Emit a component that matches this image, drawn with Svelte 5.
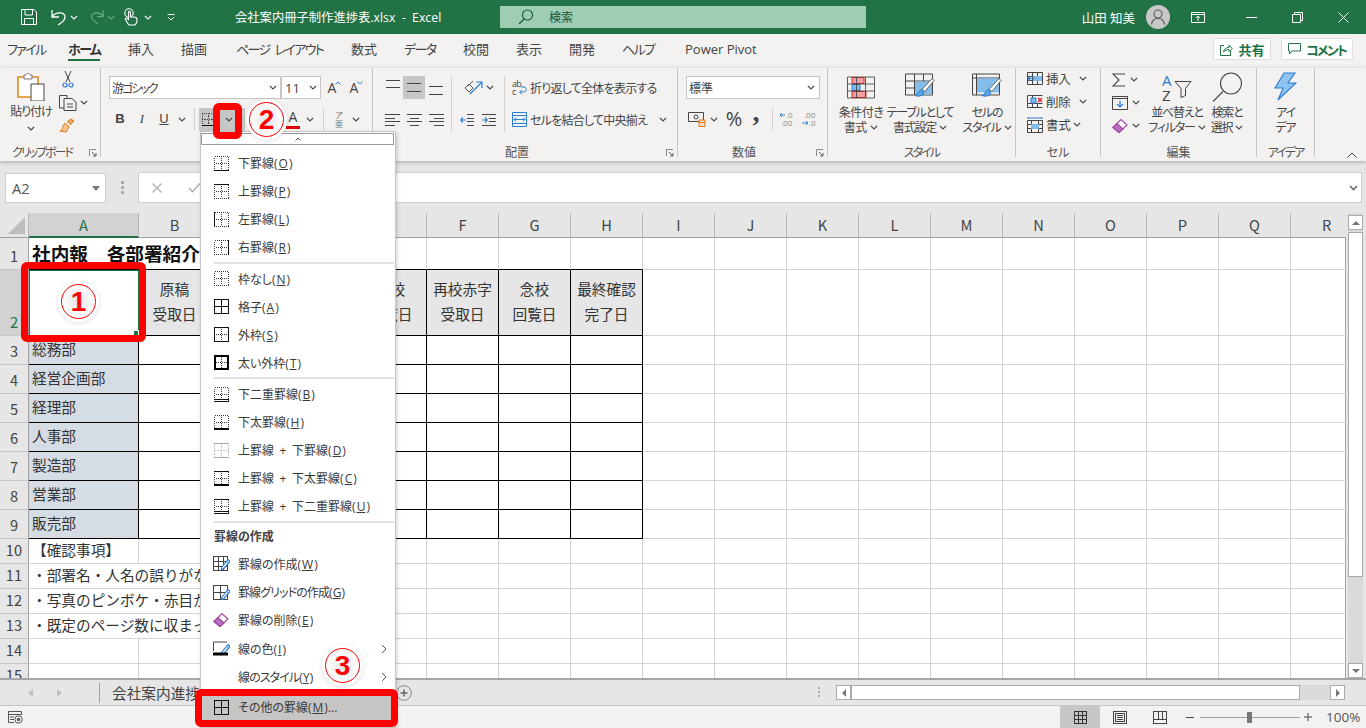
<script>
  const tabs = [
    { t: 'ファイル', w: 61, k: true }, { t: 'ホーム', w: 60, on: true, k: true }, { t: '挿入', w: 53 }, { t: '描画', w: 55 },
    { t: 'ページ レイアウト', w: 115, k: true }, { t: '数式', w: 53 }, { t: 'データ', w: 59, k: true }, { t: '校閲', w: 53 },
    { t: '表示', w: 53 }, { t: '開発', w: 53 }, { t: 'ヘルプ', w: 63, k: true }, { t: 'Power Pivot', w: 90 }
  ];
  const cols = ['A','B','C','D','E','F','G','H','I','J','K','L','M','N','O','P','Q','R'];
  const rows = [1,2,3,4,5,6,7,8,9,10,11,12,13,14,15];
  const text = {
    1: ['社内報　各部署紹介ページ制作進捗表'],
    2: ['', '原稿|受取日', '初校|回覧日', '初校|赤字', '再校|回覧日', '再校赤字|受取日', '念校|回覧日', '最終確認|完了日'],
    3: ['総務部'], 4: ['経営企画部'], 5: ['経理部'], 6: ['人事部'], 7: ['製造部'], 8: ['営業部'], 9: ['販売部'],
    10: ['【確認事項】'], 11: ['・部署名・人名の誤りがないか'], 12: ['・写真のピンボケ・赤目がないか'], 13: ['・既定のページ数に収まっているか']
  };
  function cellClass(r, c) {
    const k = ['cell'];
    if (r === 1) { k.push('big'); if (c < 3) k.push('nr'); if (c <= 7) k.push('bb'); }
    if (r === 2) { if (c === 0) k.push('sel'); else if (c <= 7) k.push('hd', 'br', 'bb'); }
    if (r >= 3 && r <= 9 && c <= 7) { k.push('br', 'bb'); if (c === 0) k.push('dept'); }
    if (r >= 11 && r <= 13 && c < 3) k.push('nr');
    if (c === 17) k.push('last');
    return k.join(' ');
  }
  const thinB = {
    bottom: 'M0 14.5H15', top: 'M0 .5H15', left: 'M.5 0V15', right: 'M14.5 0V15', none: '',
    all: 'M.5 .5H14.5V14.5H.5Z M7.5 0V15 M0 7.5H15', outer: 'M.5 .5H14.5V14.5H.5Z',
    dbl: 'M0 12.5H15 M0 14.5H15', tdbl: 'M0 .5H15 M0 12.5H15 M0 14.5H15', tthick: 'M0 .5H15'
  };
  const menu1 = [
    [['下罫線(','O',')','bottom'],['上罫線(','P',')','top'],['左罫線(','L',')','left'],['右罫線(','R',')','right']],
    [['枠なし(','N',')','none'],['格子(','A',')','all'],['外枠(','S',')','outer'],['太い外枠(','T',')','thick']],
    [['下二重罫線(','B',')','dbl'],['下太罫線(','H',')','thickb'],['上罫線 + 下罫線(','D',')','grey'],['上罫線 + 下太罫線(','C',')','tthick'],['上罫線 + 下二重罫線(','U',')','tdbl']]
  ];
</script>

{#snippet chev(cls = '')}
  <svg class="chev {cls}" width="8" height="5" viewBox="0 0 8 5"><path d="M.8 .8 4 4 7.2 .8" fill="none" stroke-width="1.2"/></svg>
{/snippet}

{#snippet launcher()}
  <svg class="launch" width="8" height="8" viewBox="0 0 8 8"><path d="M.5 7V.5H7" fill="none" stroke="#8a8886"/><path d="M3 3 7 7M7 4V7H4" fill="none" stroke="#605e5c"/></svg>
{/snippet}

{#snippet bi(k)}
  <svg class="mi" width="15" height="15" viewBox="0 0 15 15" shape-rendering="crispEdges">
    {#if k === 'grey'}
      <path d="M.5 .5H14.5V14.5H.5Z M7.5 0V15 M0 7.5H15" fill="none" stroke="#c8c8c8" stroke-dasharray="2 1"/>
      <path d="M0 .5H15 M0 14.5H15" fill="none" stroke="#a8a8a8"/>
    {:else}
      {#if k !== 'all' && k !== 'outer' && k !== 'thick'}
        <path d="M.5 .5H14.5V14.5H.5Z" fill="none" stroke="#3b3a39" stroke-dasharray="1 1"/>
      {/if}
      {#if k !== 'all'}
        <path d="M7.5 2V13 M2 7.5H13" fill="none" stroke="#3b3a39" stroke-dasharray="1 1"/>
      {/if}
      {#if thinB[k]}<path d={thinB[k]} fill="none" stroke="#111"/>{/if}
      {#if k === 'thick'}<path d="M1 1H14V14H1Z" fill="none" stroke="#000" stroke-width="2"/>{/if}
      {#if k === 'thickb' || k === 'tthick'}<path d="M0 14H15" fill="none" stroke="#000" stroke-width="2"/>{/if}
    {/if}
  </svg>
{/snippet}

{#snippet pen()}
  <path d="M9 11 15 3.5 17 5.2 11 12.5 8.5 13.5Z" fill="#fff" stroke="#2b7cd3" stroke-width="1.2"/>
  <path d="M13.5 5 15.5 7" stroke="#2b7cd3"/>
{/snippet}

{#snippet eraser()}
  <svg width="16" height="16" viewBox="0 0 16 16"><path d="M1 9.5 9 1.5 15 7 7 14.5Z" fill="#fff" stroke="#a349a4" stroke-width="1.2"/><path d="M1 9.5 5 5.5 11 11 7 14.5Z" fill="#b86fc0" stroke="#a349a4" stroke-width="1.2"/></svg>
{/snippet}

{#snippet largeText(a, b)}
  <span class="ll">{a}</span><span class="ll">{b} {@render chev()}</span>
{/snippet}

<div class="app">
  <header class="titlebar">
    <div class="qat">
      <svg width="16" height="16" viewBox="0 0 16 16" fill="none" stroke="#fff"><path d="M.5 .5H13L15.5 3V15.5H.5Z M4 .5V6H11.5V.5 M3.5 15.5V9.5H12.5V15.5"/></svg>
      <i></i>
      <svg width="18" height="17" viewBox="0 0 18 17" fill="none" stroke="#fff" stroke-width="1.3"><path d="M2 1V8H9 M2 8C5 3 15 2 15 8 15 12 11 14 8 16"/></svg>
      {@render chev('w')}
      <i></i>
      <svg width="16" height="16" viewBox="0 0 18 17" fill="none" stroke="#6aa587" stroke-width="1.3"><path d="M16 1V8H9 M16 8C13 3 3 2 3 8 3 12 7 14 10 16"/></svg>
      {@render chev('dim')}
      <i></i>
      <svg width="14" height="18" viewBox="0 0 14 18" fill="none" stroke="#fff" stroke-width="1.1"><circle cx="5" cy="5" r="4.2"/><path d="M4 16 1.5 11.5C1 10 2.5 9.5 3.5 10.5L4.5 11.5V4.5C4.5 3 6.5 3 6.5 4.5V9H10C12 9 13 10 13 11.5V13C13 15 12 16 11 17H5Z" fill="#217346"/></svg>
      {@render chev('w')}
      <svg width="8" height="7" viewBox="0 0 8 7" fill="none" stroke="#fff"><path d="M.5 .5H7.5M.8 3 4 6 7.2 3"/></svg>
    </div>
    <div class="doc">会社案内冊子制作進捗表.xlsx  -  Excel</div>
    <div class="search">
      <svg width="16" height="16" viewBox="0 0 16 16" fill="none" stroke="#17553a" stroke-width="1.1"><circle cx="9.5" cy="6" r="5"/><path d="M6 10 1 15"/></svg>
      <span>検索</span>
    </div>
    <div class="user">
      <span class="uname">山田 知美</span>
      <span class="avatar">
        <svg width="16" height="16" viewBox="0 0 16 16" fill="none" stroke="#555" stroke-width="1.1"><circle cx="8" cy="5" r="4"/><path d="M1.5 15.5C2 11.5 4.5 9.5 8 9.5S14 11.5 14.5 15.5"/></svg>
      </span>
      <span class="ctl disp"><svg width="14" height="11" viewBox="0 0 14 11" fill="none" stroke="#fff"><path d="M.5 .5H13.5V10.5H.5Z M.5 2.5H13.5 M7 9V4.5 M5 6 7 4 9 6"/></svg></span>
      <span class="ctl"><svg width="11" height="1" viewBox="0 0 11 1"><path d="M0 .5H11" stroke="#fff"/></svg></span>
      <span class="ctl"><svg width="11" height="11" viewBox="0 0 11 11" fill="none" stroke="#fff"><path d="M.5 2.5H8.5V10.5H.5Z M2.5 2.5V.5H10.5V8.5H8.5"/></svg></span>
      <span class="ctl"><svg width="11" height="11" viewBox="0 0 11 11" fill="none" stroke="#fff"><path d="M.5 .5 10.5 10.5M10.5 .5 .5 10.5"/></svg></span>
    </div>
  </header>

  <nav class="tabrow">
    {#each tabs as t}
      <div class="tab" class:on={t.on} class:k={t.k} style="width:{t.w}px"><span>{t.t}</span></div>
    {/each}
    <div class="shr">
      <svg width="14" height="13" viewBox="0 0 14 13" fill="none" stroke="#217346"><path d="M5 2.5H1.5V12.5H11.5V8 M4.5 9C5 6 7 4.5 10 4.5V2L13 5.5 10 8.5V6.5C8 6.5 6 7.5 4.5 9Z"/></svg>
      <b>共有</b>
    </div>
    <div class="shr cm">
      <svg width="13" height="12" viewBox="0 0 13 12" fill="none" stroke="#217346"><path d="M.5 .5H12.5V8H4L1.5 11V8H.5Z"/></svg>
      <b>コメント</b>
    </div>
  </nav>

  <section class="ribbon">
    <div class="grp g-clip">
      <div class="body clipb">
        <div class="paste">
          <svg width="28" height="28" viewBox="0 0 28 28"><path d="M1 4H21V24H1Z" fill="#fff" stroke="#e08a1e" stroke-width="1.6"/><path d="M7 4V2H9C9 0 13 0 13 2H15V6H7Z" fill="#fff" stroke="#777"/><path d="M14 11H27V28H14Z" fill="#fff" stroke="#444"/></svg>
          <span class="ll pl">貼り付け</span>
          {@render chev()}
        </div>
        <div class="tools">
          <span><svg width="12" height="17" viewBox="0 0 12 17" fill="none"><path d="M3 0 8 11M9 0 4 11" stroke="#444"/><circle cx="3" cy="14" r="2" stroke="#2b7cd3" stroke-width="1.2"/><circle cx="9" cy="14" r="2" stroke="#2b7cd3" stroke-width="1.2"/></svg></span>
          <span class="t2"><svg width="18" height="16" viewBox="0 0 18 16" fill="none" stroke="#444"><path d="M.5 .5H8V13H.5Z"/><path d="M5 3.5H13L17 7V15.5H5Z" fill="#f3f2f1"/><path d="M8 9H14M8 12H14"/></svg>{@render chev()}</span>
          <span class="t2"><svg width="16" height="15" viewBox="0 0 16 15"><path d="M6 5 10 9 7 14 1 13C3 12 4 10 4 8Z" fill="#f7c58a" stroke="#d9791b"/><path d="M8 4 12 1 15 3 11 7" fill="#e8a35a" stroke="#d9791b"/></svg></span>
        </div>
      </div>
      <div class="lbl tight">クリップボード{@render launcher()}</div>
    </div>

    <div class="grp g-font">
      <div class="body fontb">
        <div class="r1">
          <div class="sel-box fname"><span>游ゴシック</span>{@render chev()}</div>
          <div class="sel-box fsize"><span>11</span>{@render chev()}</div>
          <span class="aa">A<svg class="sup" width="6" height="4" viewBox="0 0 6 4" fill="none" stroke="#2b7cd3"><path d="M.5 3.5 3 1 5.5 3.5"/></svg></span>
          <span class="aa">A<svg class="sup" width="6" height="4" viewBox="0 0 6 4" fill="none" stroke="#2b7cd3"><path d="M.5 .5 3 3 5.5 .5"/></svg></span>
        </div>
        <div class="r2">
          <b class="bt">B</b><em class="bt it">I</em><u class="bt">U</u>{@render chev()}
          <i></i><span class="vs1"></span><i></i>
          <span class="borderbtn">
            <svg width="13" height="13" viewBox="0 0 15 15" shape-rendering="crispEdges"><path d="M.5 .5H14.5V14.5H.5Z M7.5 0V15 M0 7.5H15" fill="none" stroke="#333" stroke-dasharray="1 1"/><path d="M0 14.5H15" stroke="#000"/></svg>
            {@render chev()}
          </span>
          <svg width="18" height="16" viewBox="0 0 18 16" fill="none" stroke="#444"><path d="M8 1 14 7 8 13 2 7Z"/><path d="M0 14H14" stroke="#ffd400" stroke-width="2"/></svg>
          {@render chev()}
          <span class="fc">A</span>
          {@render chev()}
          <i></i><span class="vs1"></span><i></i>
          <span class="phon">ア<br/>亜</span>
          {@render chev()}
        </div>
      </div>
      <div class="lbl"></div>
    </div>

    <div class="grp g-align">
      <div class="body alignb">
        <span class="ai"><svg width="14" height="23" viewBox="0 0 14 23"><path d="M0 4.5H14M0 11.5H14" stroke="#444"/></svg></span>
        <span class="ai on"><svg width="14" height="23" viewBox="0 0 14 23"><path d="M0 7.5H14M0 15.5H14" stroke="#444"/></svg></span>
        <span class="ai"><svg width="14" height="23" viewBox="0 0 14 23"><path d="M0 10.5H14M0 18.5H14" stroke="#444"/></svg></span>
        <i></i>
        <span class="vs2 a"></span>
        <span class="angle"><svg width="20" height="16" viewBox="0 0 20 16" fill="none"><path d="M1 8 5 4 9 8 5 12Z M4 6 9 1" stroke="#555"/><path d="M6 14 17 3M12 2H18V8" stroke="#2b7cd3" stroke-width="1.2"/></svg>{@render chev()}</span>
        <i></i>
        <span class="vs2 b"></span>
        <i></i>
        <span class="wide">
          <svg width="15" height="17" viewBox="0 0 15 17"><text x="0" y="8" class="svt" fill="#444">ab</text><text x="0" y="16" class="svt" fill="#444">c</text><path d="M8 13H12C15 13 15 8 12 8H9M10 11 7.5 13 10 15.5" fill="none" stroke="#2b7cd3"/></svg>
          <span>折り返して全体を表示する</span>
        </span>

        <span class="ai"><svg width="15" height="12" viewBox="0 0 15 12"><path d="M0 .5H15M0 4.5H10M0 7.5H15M0 11.5H10" stroke="#444"/></svg></span>
        <span class="ai"><svg width="15" height="12" viewBox="0 0 15 12"><path d="M0 .5H15M3 4.5H12M0 7.5H15M3 11.5H12" stroke="#444"/></svg></span>
        <span class="ai"><svg width="15" height="12" viewBox="0 0 15 12"><path d="M0 .5H15M5 4.5H15M0 7.5H15M5 11.5H15" stroke="#444"/></svg></span>
        <i></i>
        <span class="indents">
          <svg width="14" height="12" viewBox="0 0 14 12" fill="none"><path d="M7 .5H14M7 4.5H14M7 7.5H14M7 11.5H14" stroke="#444"/><path d="M6 6H1M3 3.5 .8 6 3 8.5" stroke="#2b7cd3" stroke-width="1.2"/></svg>
          <svg width="14" height="12" viewBox="0 0 14 12" fill="none"><path d="M0 .5H14M7 4.5H14M7 7.5H14M0 11.5H14" stroke="#444"/><path d="M0 6H5M3 3.5 5.2 6 3 8.5" stroke="#2b7cd3" stroke-width="1.2"/></svg>
        </span>
        <span class="wide merge">
          <svg width="15" height="15" viewBox="0 0 15 15" fill="none"><path d="M.5 .5H14.5V14.5H.5Z M.5 3.5H14.5 M.5 11.5H14.5" stroke="#2b7cd3"/><path d="M2 7.5H13M4 5.5 2 7.5 4 9.5M11 5.5 13 7.5 11 9.5" stroke="#2b7cd3"/></svg>
          <span>セルを結合して中央揃え</span>
          {@render chev()}
        </span>
      </div>
      <div class="lbl">配置{@render launcher()}</div>
    </div>

    <div class="grp g-num">
      <div class="body numb">
        <div class="sel-box nf"><span>標準</span>{@render chev()}</div>
        <div class="nr2">
          <svg width="18" height="16" viewBox="0 0 18 16" fill="none"><path d="M.5 1.5H15.5V10.5H.5Z" stroke="#444"/><circle cx="8" cy="6" r="2" stroke="#444"/><path d="M11 9H17V15.5H11Z M11 11.5H17" stroke="#e3730f" fill="#fbe3c8"/></svg>
          {@render chev()}
          <span class="pct">%</span>
          <span class="com">,</span>
          <i></i>
          <span class="vs1"></span>
          <svg width="15" height="15" viewBox="0 0 15 15"><path d="M6 3H1M3 1 1 3 3 5" fill="none" stroke="#2b7cd3"/><text x="7" y="6" class="svd">.0</text><text x="2" y="14" class="svd">.00</text></svg>
          <svg width="16" height="15" viewBox="0 0 16 15"><text x="3" y="6" class="svd">.00</text><path d="M1 11H7M5 9 7 11 5 13" fill="none" stroke="#2b7cd3"/><text x="8" y="14" class="svd">.0</text></svg>
        </div>
      </div>
      <div class="lbl">数値{@render launcher()}</div>
    </div>

    <div class="grp g-style">
      <div class="body styleb">
        <div class="large c1">
          <svg width="28" height="22" viewBox="0 0 28 22"><path d="M5 1H17V7H5Z M5 15H19V21H5Z" fill="#f4a0a6" stroke="#e02020"/><path d="M5 8H13V14H5Z" fill="#7fbaea" stroke="#2b7cd3"/><path d="M.5 .5H27.5V21.5H.5Z M.5 7.5H27.5 M.5 14.5H27.5 M9.5 .5V21.5 M18.5 .5V21.5" fill="none" stroke="#444" opacity=".85"/></svg>
          <div class="ltxt">{@render largeText('条件付き', '書式')}</div>
        </div>
        <div class="large c2">
          <svg width="30" height="28" viewBox="0 0 30 28"><path d="M.5 .5H27.5V21.5H.5Z M.5 7.5H27.5 M.5 14.5H27.5 M9.5 .5V21.5 M18.5 .5V21.5" fill="none" stroke="#444"/><path d="M10 8H27V21H10Z" fill="#83bdec"/><path d="M27 5 29 7 20 18 17 16Z" fill="#fff" stroke="#666"/><path d="M16 16C18 17 19 19 18 21 16 23 12 23 10 22 13 21 13 18 16 16Z" fill="#5ba7e6" stroke="#2b7cd3"/></svg>
          <div class="ltxt">{@render largeText('テーブルとして', '書式設定')}</div>
        </div>
        <div class="large c3">
          <svg width="30" height="28" viewBox="0 0 30 28"><path d="M.5 .5H27.5V21.5H.5Z M.5 4.5H27.5 M4.5 .5V21.5" fill="none" stroke="#444"/><path d="M5 5H27V19H5Z" fill="#83bdec"/><path d="M27 5 29 7 20 18 17 16Z" fill="#fff" stroke="#666"/><path d="M16 16C18 17 19 19 18 21 16 23 12 23 10 22 13 21 13 18 16 16Z" fill="#5ba7e6" stroke="#2b7cd3"/></svg>
          <div class="ltxt">{@render largeText('セルの', 'スタイル')}</div>
        </div>
      </div>
      <div class="lbl ctr tight">スタイル</div>
    </div>

    <div class="grp g-cell">
      <div class="body cellb">
        <div class="crow">
          <svg width="16" height="13" viewBox="0 0 16 13" fill="none"><path d="M.5 .5H15.5V12.5H.5Z M.5 4.5H15.5 M.5 8.5H15.5 M5.5 .5V12.5 M10.5 .5V12.5" stroke="#444"/><path d="M6 4H15V9H6Z" fill="#7fbaea"/><path d="M7 6.5H1M3.5 4 1 6.5 3.5 9" stroke="#2b7cd3" stroke-width="1.2"/></svg>
          <span>挿入</span>{@render chev()}
        </div>
        <div class="crow">
          <svg width="16" height="13" viewBox="0 0 16 13" fill="none"><path d="M.5 .5H15.5M.5 12.5H15.5M.5 .5V12.5M.5 8.5H15.5M5.5 8.5V12.5M10.5 8.5V12.5M5.5 .5V3" stroke="#444"/><path d="M4 3H9V8H4Z" fill="#7fbaea" stroke="#2b7cd3"/><path d="M11 3 15 7M15 3 11 7" stroke="#e02020" stroke-width="1.3"/></svg>
          <span>削除</span>{@render chev()}
        </div>
        <div class="crow fm">
          <svg width="16" height="16" viewBox="0 0 16 16" fill="none"><path d="M.5 3.5H15.5V15.5H.5Z M.5 7.5H15.5 M.5 11.5H15.5 M4.5 3.5V15.5 M11.5 3.5V15.5" stroke="#444"/><path d="M4 7H12V12H4Z" fill="#7fbaea"/><path d="M1 1H15M1 0V2M15 0V2" stroke="#2b7cd3"/></svg>
          <span>書式</span>{@render chev()}
        </div>
      </div>
      <div class="lbl ctr">セル</div>
    </div>

    <div class="grp g-edit">
      <div class="body editb">
        <div class="tools2">
          <span><svg width="14" height="14" viewBox="0 0 14 14" fill="none"><path d="M13 1H1L7 7 1 13H13" stroke="#444" stroke-width="1.1"/></svg>{@render chev()}</span>
          <span><svg width="16" height="14" viewBox="0 0 16 14" fill="none"><path d="M.5 .5H15.5V13.5H.5Z M.5 2.5H15.5" stroke="#444"/><path d="M8 4.5V11M5 8 8 11 11 8" stroke="#2b7cd3" stroke-width="1.2"/></svg>{@render chev()}</span>
          <span>{@render eraser()}{@render chev()}</span>
        </div>
        <div class="large c4">
          <svg width="30" height="28" viewBox="0 0 30 28"><text x="0" y="12" class="sva" fill="#2b7cd3">A</text><text x="0" y="27" class="sva" fill="#444">Z</text><path d="M13 8H29L23.5 15V22L19 24V15Z" fill="none" stroke="#444"/></svg>
          <div class="ltxt">{@render largeText('並べ替えと', 'フィルター')}</div>
        </div>
        <div class="large c5">
          <svg width="30" height="30" viewBox="0 0 30 30" fill="none" stroke="#444" stroke-width="1.1"><circle cx="19" cy="11" r="10.5"/><path d="M11 19 1 29"/></svg>
          <div class="ltxt">{@render largeText('検索と', '選択')}</div>
        </div>
      </div>
      <div class="lbl ctr">編集</div>
    </div>

    <div class="grp g-idea">
      <div class="body ideab">
        <svg width="23" height="29" viewBox="0 0 23 29"><path d="M10 1H21L14 11H22L4 28 9 16H1Z" fill="#8ec3ef" stroke="#2b7cd3" stroke-width="1.1"/></svg>
        <div class="ltxt"><span class="ll">アイ</span><span class="ll">デア</span></div>
      </div>
      <div class="lbl ctr tight">アイデア</div>
    </div>

    <div class="rb-end">
      <svg width="10" height="6" viewBox="0 0 10 6" fill="none" stroke="#444"><path d="M.5 5.5 5 1 9.5 5.5"/></svg>
    </div>
  </section>

  <section class="fbar">
    <div class="namebox"><span>A2</span><em class="caret"></em></div>
    <div class="dots"></div>
    <div class="fx">
      <svg width="12" height="12" viewBox="0 0 12 12" fill="none" stroke="#b5b5b5" stroke-width="1.4"><path d="M1.5 1.5 10.5 10.5M10.5 1.5 1.5 10.5"/></svg>
      <svg class="ck" width="13" height="11" viewBox="0 0 13 11" fill="none" stroke="#b5b5b5" stroke-width="1.6"><path d="M1 6 4.5 9.5 12 1.5"/></svg>
      <svg class="fxc" width="9" height="6" viewBox="0 0 9 6" fill="none" stroke="#6a6a6a" stroke-width="1.6"><path d="M1 1 4.5 4.5 8 1"/></svg>
    </div>
  </section>

  <section class="main">
    <div class="sheet">
      <div class="corner"><em></em></div>
      {#each cols as c, i}
        <div class="colh" class:csel={i === 0} class:lasth={i === 17}>{c}</div>
      {/each}
      {#each rows as r}
        <div class="rowh" class:rsel={r === 2}>{r}</div>
        {#each cols as c, i}
          {@const v = text[r]?.[i]}
          <div class={cellClass(r, i)}>
            {#if v && r === 2}
              <div class="two">{#each v.split('|') as l}<span>{l}</span>{/each}</div>
            {:else if v}
              <span class="tx">{v}</span>
            {/if}
            {#if r === 2 && i === 0}<em class="handle"></em>{/if}
          </div>
        {/each}
      {/each}
    </div>
    <aside class="vscroll">
      <div class="sbtn"><em class="tri up"></em></div>
      <div class="vthumb"></div>
      <div class="vrest"></div>
      <div class="sbtn"><em class="tri dn"></em></div>
    </aside>
  </section>

  <section class="sheetbar">
    <em class="nav lft"></em>
    <em class="nav rgt"></em>
    <span class="sbsep"></span>
    <span class="stab">会社案内進捗表</span>
    <span class="plus">
      <svg width="16" height="16" viewBox="0 0 16 16" fill="none"><circle cx="8" cy="8" r="7.3" stroke="#888"/><path d="M4.5 8H11.5M8 4.5V11.5" stroke="#666" stroke-width="1.5"/></svg>
    </span>
    <span class="sdots"></span>
    <div class="hs">
      <div class="sbtn h"><em class="tri lf"></em></div>
      <div class="hthumb"></div>
      <div class="hrest"></div>
      <div class="sbtn h"><em class="tri rt"></em></div>
    </div>
  </section>

  <footer class="status">
    <svg class="mac" width="15" height="13" viewBox="0 0 15 13" fill="none" stroke="#555"><path d="M.5 .5H13.5V4M.5 .5V11.5H6M.5 3.5H13.5M2 6H6M2 8.5H6"/><circle cx="10.5" cy="8.5" r="3.7"/><circle cx="10.5" cy="8.5" r="1.3" fill="#555"/></svg>
    <div class="views">
      <span class="vbtn on"><svg width="13" height="13" viewBox="0 0 13 13" fill="none" stroke="#333" shape-rendering="crispEdges"><path d="M.5 .5H12.5V12.5H.5Z M4.5 .5V12.5 M8.5 .5V12.5 M.5 4.5H12.5 M.5 8.5H12.5"/></svg></span>
      <span class="vbtn"><svg width="14" height="13" viewBox="0 0 14 13" fill="none" stroke="#444" shape-rendering="crispEdges"><path d="M.5 .5H13.5V12.5H.5Z M2.5 2.5H11.5V10.5H2.5Z M4 4.5H10 M4 6.5H10 M4 8.5H10"/></svg></span>
      <span class="vbtn"><svg width="14" height="13" viewBox="0 0 14 13" fill="none" stroke="#444" shape-rendering="crispEdges"><path d="M.5 .5H13.5V12.5H.5Z M.5 8.5H13.5 M5.5 .5V8.5 M9.5 .5V8.5" /></svg></span>
    </div>
    <svg class="zm" width="8" height="1" viewBox="0 0 8 1"><path d="M0 .5H8" stroke="#444"/></svg>
    <div class="slider"><em></em></div>
    <svg class="zp" width="8" height="8" viewBox="0 0 8 8"><path d="M0 4H8M4 0V8" stroke="#444"/></svg>
    <span class="zoom">100%</span>
  </footer>

  <div class="menu">
    <div class="mscroll">
      <svg width="6" height="4" viewBox="0 0 6 4" fill="none" stroke="#444"><path d="M.5 3.5 3 1 5.5 3.5"/></svg>
    </div>
    {#each menu1 as sec, si}
      {#if si > 0}<div class="msep"></div>{/if}
      {#each sec as m}
        <div class="mitem">{@render bi(m[3])}<span>{m[0]}<u>{m[1]}</u>{m[2]}</span></div>
      {/each}
    {/each}
    <div class="msep"></div>
    <div class="mhead">罫線の作成</div>
    <div class="mitem x">
      <svg class="mi" width="17" height="15" viewBox="0 0 17 15" fill="none"><path d="M.5 .5H14.5V14.5H.5Z M.5 5.5H14.5 M.5 10.5H14.5 M5.5 .5V14.5 M10.5 .5V14.5" stroke="#444" shape-rendering="crispEdges"/>{@render pen()}</svg>
      <span>罫線の作成(<u>W</u>)</span>
    </div>
    <div class="mitem x">
      <svg class="mi" width="17" height="15" viewBox="0 0 17 15" fill="none"><path d="M.5 .5H14.5V14.5H.5Z M.5 7.5H14.5 M7.5 .5V14.5" stroke="#444" shape-rendering="crispEdges"/><g transform="translate(0,1)">{@render pen()}</g></svg>
      <span class="k">罫線グリッドの作成(<u>G</u>)</span>
    </div>
    <div class="mitem x"><span class="mi">{@render eraser()}</span><span>罫線の削除(<u>E</u>)</span></div>
    <div class="mitem x">
      <svg class="mi" width="17" height="15" viewBox="0 0 17 15" fill="none"><path d="M.5 10V1H14" stroke="#444"/>{@render pen()}<path d="M0 13H15" stroke="#000" stroke-width="3"/></svg>
      <span>線の色(<u>I</u>)</span><svg class="arr" width="6" height="10" viewBox="0 0 6 10" fill="none" stroke="#555"><path d="M1 1 5 5 1 9"/></svg>
    </div>
    <div class="mitem x">
      <span class="mi"></span>
      <span class="k">線のスタイル(<u>Y</u>)</span><svg class="arr" width="6" height="10" viewBox="0 0 6 10" fill="none" stroke="#555"><path d="M1 1 5 5 1 9"/></svg>
    </div>
    <div class="mitem more">{@render bi('all')}<span>その他の罫線(<u>M</u>)...</span></div>
  </div>

  <div class="frame f1"></div>
  <div class="frame f2"></div>
  <div class="frame f3"></div>
  <div class="badge b1"><span>1</span></div>
  <div class="badge b2"><span>2</span></div>
  <div class="badge b3"><span>3</span></div>
</div>

<style>
  :global(body) { margin: 0; }
  .app {
    position: relative; width: 1366px; height: 728px; overflow: hidden; background: #e6e6e6;
    font-family: "Open Sans", "Noto Sans CJK JP", sans-serif; font-size: 12px; color: #444;
    font-feature-settings: "palt";
  }
  i { display: block; }
  em { font-style: normal; display: block; }
  svg { display: block; flex: none; }
  .chev { stroke: #444; }
  .chev.w { stroke: #fff; }
  .chev.dim { stroke: #6aa587; }
  .ll .chev { display: inline-block; vertical-align: 2px; margin-left: 1px; }

  /* title bar */
  .titlebar { height: 34px; background: #217346; color: #fff; display: flex; align-items: center; }
  .qat {
    width: 214px; padding-left: 21px; display: grid; align-items: center; justify-items: center;
    grid-template-columns: 16px 13px 18px 12px 9px 16px 12px 7px 14px 20px 26px 23px;
  }
  .doc { width: 265px; font-size: 12.3px; white-space: pre; font-feature-settings: normal; }
  .search { width: 366px; height: 22px; background: #9fcdb3; display: flex; align-items: center; color: #17553a; }
  .search svg { margin-left: 18px; }
  .search span { margin-left: 15px; font-size: 12px; }
  .user { margin-left: auto; display: flex; align-items: center; height: 34px; }
  .uname { font-size: 12.5px; }
  .avatar { width: 24px; height: 24px; margin: 0 5px 0 11px; border-radius: 50%; background: #c8c8c8; display: flex; align-items: center; justify-content: center; }
  .ctl { width: 46px; height: 34px; display: flex; align-items: center; justify-content: center; }
  .ctl.disp { margin-right: 7px; }

  /* tabs */
  .tabrow { height: 34px; background: #f3f2f1; display: flex; padding-left: 7px; box-sizing: border-box; }
  .tab { flex: none; padding-top: 5px; font-size: 13px; line-height: 20px; color: #444; white-space: nowrap; }
  .tab.k { letter-spacing: -1.6px; word-spacing: 3px; }
  .tab span { display: inline-block; height: 20px; }
  .tab.on span { font-weight: 700; color: #333; border-bottom: 2px solid #217346; }
  .shr {
    width: 58px; height: 22px; margin: 4px 0 0 auto; box-sizing: border-box; background: #fff; border: 1px solid #e1dfdd; border-radius: 2px;
    display: flex; align-items: center; justify-content: center; gap: 5px; color: #217346; font-size: 13px;
  }
  .shr.cm { width: 72px; margin: 4px 13px 0 10px; letter-spacing: -1.8px; }

  /* ribbon */
  .ribbon { position: relative; z-index: 1; height: 93px; background: #f3f2f1; display: flex; box-shadow: 0 1px 4px rgba(0,0,0,.28); }
  .grp { height: 89px; box-sizing: border-box; border-right: 1px solid #c8c6c4; display: flex; flex-direction: column; flex: none; }
  .body { height: 76px; flex: none; box-sizing: border-box; }
  .lbl { position: relative; height: 13px; line-height: 14px; padding-top: 2px; font-size: 12px; color: #555; white-space: nowrap; box-sizing: border-box; }
  .lbl.ctr { text-align: center; }
  .lbl.tight { letter-spacing: -2px; }
  .launch { position: absolute; right: 3px; top: 5px; }
  .g-clip { width: 101px; } .g-font { width: 272px; } .g-align { width: 305px; } .g-num { width: 150px; }
  .g-style { width: 188px; } .g-cell { width: 85px; } .g-edit { width: 156px; } .g-idea { width: 58px; }
  .g-clip .lbl { padding-left: 12px; }
  .g-align .lbl { padding-left: 132px; }
  .g-num .lbl { padding-left: 54px; }

  .clipb { display: flex; padding-left: 3px; }
  .paste { width: 56px; display: flex; flex-direction: column; align-items: center; padding-top: 5px; }
  .pl { margin-top: 4px; letter-spacing: -1px; }
  .paste .chev { margin-top: 6px; }
  .ll { display: block; line-height: 14.5px; white-space: nowrap; text-align: center; }
  .tools { display: flex; flex-direction: column; }
  .tools span { height: 23px; display: flex; align-items: center; padding-left: 3px; gap: 3px; }
  .tools span.t2 { padding-left: 0; }

  .fontb { padding: 8px 0 0 8px; }
  .r1 { display: flex; height: 23px; align-items: center; }
  .sel-box { box-sizing: border-box; height: 23px; background: #fff; border: 1px solid #c8c6c4; display: flex; align-items: center; justify-content: space-between; padding: 0 3px 0 2px; }
  .fname { width: 172px; font-size: 12px; letter-spacing: -2px; }
  .fsize { width: 40px; padding-left: 3px; font-size: 13px; }
  .aa { width: 22px; font-size: 14px; text-align: center; position: relative; line-height: 23px; }
  .aa .sup { position: absolute; top: 5px; right: 2px; }
  .r2 {
    margin-top: 8px; height: 24px; display: grid; align-items: center; justify-items: center;
    grid-template-columns: 22px 22px 22px 13px 6px 1px 4px 46px 24px 16px 16px 18px 4px 1px 4px 22px 12px;
  }
  .bt { font-size: 13px; line-height: 16px; color: #444; font-family: "Liberation Sans", sans-serif; }
  .it { font-style: italic; font-family: "Liberation Serif", serif; }
  .vs1 { width: 1px; height: 22px; background: #d2d0ce; display: block; }
  .borderbtn { width: 46px; height: 23px; background: #c8c6c4; display: flex; align-items: center; padding-left: 3px; box-sizing: border-box; gap: 10px; }
  .fc { font-size: 14px; line-height: 14px; padding-bottom: 2px; border-bottom: 3px solid #e00000; width: 14px; text-align: center; }
  .phon { font-size: 8px; line-height: 9px; text-align: center; color: #777; }

  .alignb {
    padding: 8px 0 0 9px; display: grid; align-items: center; justify-items: center;
    grid-template-columns: 21px 22px 22px 4px 1px 38px 14px 1px 7px 1fr;
    grid-template-rows: 23px 23px; row-gap: 9px;
  }
  .ai { width: 100%; height: 23px; display: flex; align-items: center; justify-content: center; }
  .ai.on { background: #c8c6c4; }
  .vs2 { grid-row: 1 / 3; width: 1px; height: 56px; background: #d2d0ce; display: block; }
  .vs2.a { grid-column: 5; }
  .vs2.b { grid-column: 8; }
  .angle { display: flex; align-items: center; gap: 2px; justify-self: end; margin-right: -4px; }
  .wide { grid-column: 10; justify-self: start; display: flex; align-items: center; gap: 3px; white-space: nowrap; letter-spacing: -.75px; }
  .merge .chev { margin-left: 9px; }
  .indents { display: flex; gap: 8px; justify-self: end; margin-right: -6px; }
  .svt { font: 9px "Open Sans", sans-serif; }
  .svd { font: 8px "Open Sans", sans-serif; fill: #888; }
  .sva { font: 15px "Open Sans", sans-serif; }

  .numb { padding: 8px 0 0 8px; }
  .nf { width: 134px; padding-right: 4px; }
  .nr2 {
    margin-top: 8px; height: 24px; display: grid; align-items: center; justify-items: center;
    grid-template-columns: 22px 12px 28px 16px 8px 1px 26px 19px;
  }
  .pct { font-size: 20px; line-height: 24px; color: #444; }
  .com { font-size: 28px; font-weight: 700; line-height: 10px; padding-bottom: 14px; font-family: "Liberation Serif", serif; }

  .large { display: flex; flex-direction: column; align-items: center; padding-top: 4px; height: 76px; box-sizing: border-box; }
  .large > svg { margin-bottom: 3px; height: 31px; }
  .ltxt { white-space: nowrap; display: flex; flex-direction: column; align-items: center; letter-spacing: -1.2px; }
  .styleb { display: flex; padding-left: 13px; }
  .c1 { width: 40px; } .c2 { width: 78px; } .c3 { width: 56px; }
  .c1 .ltxt { letter-spacing: -.5px; }

  .cellb { margin-top: -1px; margin-bottom: 1px; padding: 0 0 0 11px; }
  .crow { height: 23px; display: flex; align-items: center; gap: 3px; font-size: 12.5px; white-space: nowrap; }
  .crow span { width: 24px; flex: none; letter-spacing: -.3px; }
  .crow .chev { margin-left: 6px; }
  .crow.fm .chev { margin-left: 0; }

  .editb { display: flex; padding-left: 11px; }
  .tools2 { width: 32px; flex: none; }
  .tools2 span { height: 23px; display: flex; align-items: center; gap: 4px; }
  .c4 { width: 66px; } .c5 { width: 34px; }

  .ideab { display: flex; flex-direction: column; align-items: center; padding-top: 4px; }
  .ideab > svg { margin-bottom: 5px; }
  .rb-end { flex: 1; display: flex; justify-content: flex-end; align-items: flex-end; padding: 0 9px 3px 0; }

  /* formula bar */
  .fbar { height: 52px; box-sizing: border-box; background: #e6e6e6; padding-top: 11px; display: flex; align-items: flex-start; }
  .namebox { width: 101px; height: 30px; margin: 1px 0 0 5px; box-sizing: border-box; background: #fff; border: 1px solid #d0d0d0; display: flex; align-items: center; padding: 0 4px 0 6px; justify-content: space-between; font-size: 14.67px; color: #555; }
  .caret { width: 0; height: 0; border: 4px solid transparent; border-top: 5px solid #777; border-bottom: 0; margin-right: 1px; }
  .dots { width: 3px; height: 13px; margin: 9px 14px 0 15px; background: repeating-linear-gradient(#aaa 0 3px, transparent 3px 5px); }
  .fx { width: 1224px; height: 31px; box-sizing: border-box; background: #fff; border: 1px solid #d0d0d0; display: flex; align-items: center; padding-left: 12px; }
  .ck { margin-left: 25px; }
  .fxc { margin-left: auto; margin-right: 3px; }

  /* sheet */
  .main { height: 465px; display: flex; background: #fff; overflow: hidden; font-feature-settings: normal; font-family: "Noto Sans CJK JP", sans-serif; }
  .sheet {
    width: 1346px; height: 465px; overflow: hidden; flex: none; display: grid;
    grid-template-columns: 29px 110px repeat(16, 72px) 56px;
    grid-template-rows: 25px 32px 66px repeat(7, 29px) repeat(6, 25px);
    font-size: 14.67px; color: #333;
  }
  .corner { background: #e6e6e6; border-right: 1px solid #b8b8b8; border-bottom: 1px solid #a0a0a0; box-sizing: border-box; position: relative; }
  .corner em { position: absolute; right: 3px; bottom: 3px; width: 0; height: 0; border-left: 17px solid transparent; border-bottom: 17px solid #bdbdbd; }
  .colh { background: #e6e6e6; border-right: 1px solid #b8b8b8; border-bottom: 1px solid #a0a0a0; box-sizing: border-box; display: flex; align-items: center; justify-content: center; color: #444; line-height: 24px; }
  .colh.csel { background: #d2d2d2; color: #217346; border-bottom: 2px solid #217346; }
  .colh.lasth { border-right: 0; justify-content: flex-start; padding-left: 31px; }
  .rowh { background: #e6e6e6; border-right: 1px solid #a0a0a0; border-bottom: 1px solid #c6c6c6; box-sizing: border-box; display: flex; align-items: flex-end; justify-content: center; line-height: 24px; padding-bottom: 1px; color: #444; }
  .rowh.rsel { background: #d2d2d2; color: #217346; }
  .cell { box-sizing: border-box; border-right: 1px solid #d4d4d4; border-bottom: 1px solid #d4d4d4; display: flex; align-items: center; position: relative; min-width: 0; padding: 0 0 3px 3px; white-space: nowrap; }
  .cell.last { border-right: 2px solid #a6a6a6; background-clip: padding-box; }
  .cell.nr { border-right: 0; }
  .cell.br { border-right-color: #000; }
  .cell.bb { border-bottom-color: #000; }
  .cell.big { font-size: 18.67px; font-weight: 700; color: #111; padding-bottom: 2px; }
  .cell.hd { background: #e7e6e6; justify-content: center; padding: 0; }
  .cell.dept { background: #d6dce4; }
  .cell.sel { border: 1px solid #217346; background: #fff; }
  .handle { position: absolute; right: -1px; bottom: -1px; width: 4px; height: 4px; background: #217346; border: 1px solid #fff; box-sizing: content-box; }
  .two { display: flex; flex-direction: column; align-items: center; line-height: 25px; margin-top: -3px; }

  .vscroll { flex: 1; display: flex; flex-direction: column; background: #dadada; box-shadow: inset 2px 0 #e6e6e6, inset -3px 0 #e6e6e6; padding: 2px 3px 0 2px; box-sizing: border-box; }
  .sbtn { width: 15px; height: 15px; box-sizing: border-box; background: #fff; border: 1px solid #aaa; display: flex; align-items: center; justify-content: center; flex: none; }
  .vthumb { height: 345px; margin-top: 2px; background: #fff; border: 1px solid #aaa; box-sizing: border-box; flex: none; }
  .vrest { flex: 1; }
  .tri { width: 0; height: 0; border: 4px solid transparent; }
  .tri.up { border-bottom: 4px solid #777; border-top: 0; }
  .tri.dn { border-top: 4px solid #777; border-bottom: 0; }
  .tri.lf { border-right: 4px solid #777; border-left: 0; }
  .tri.rt { border-left: 4px solid #777; border-right: 0; }

  .sheetbar { height: 28px; box-sizing: border-box; border-top: 2px solid #a6a6a6; border-bottom: 1px solid #c6c6c6; background: #e6e6e6; display: flex; align-items: center; }
  .nav { width: 0; height: 0; border: 4px solid transparent; }
  .nav.lft { margin-left: 28px; border-right: 5px solid #c0c0c0; border-left: 0; }
  .nav.rgt { margin-left: 24px; border-left: 5px solid #c0c0c0; border-right: 0; }
  .sbsep { width: 1px; height: 20px; background: #a0a0a0; margin: 0 12px 0 37px; }
  .stab { width: 284px; font-size: 14.67px; font-feature-settings: normal; white-space: nowrap; color: #444; font-family: "Noto Sans CJK JP", sans-serif; }
  .plus { width: 16px; }
  .sdots { width: 2px; height: 11px; margin-left: 406px; background: repeating-linear-gradient(#aaa 0 2px, transparent 2px 4px); }
  .hs { margin-left: 16px; width: 509px; height: 15px; display: flex; background: #dadada; }
  .sbtn.h { width: 15px; }
  .hthumb { width: 449px; background: #fff; border: 1px solid #aaa; box-sizing: border-box; flex: none; }
  .hrest { flex: 1; }

  .status { height: 22px; background: #f3f2f1; display: flex; align-items: center; position: relative; }
  .mac { margin-left: 8px; }
  .views { margin-left: 1037px; display: flex; height: 22px; }
  .vbtn { width: 40px; height: 22px; display: flex; align-items: center; justify-content: center; }
  .vbtn.on { background: #c8c6c4; }
  .zm { margin-left: 6px; }
  .slider { width: 100px; height: 1px; background: #a0a0a0; margin-left: 6px; position: relative; }
  .slider em { position: absolute; left: 47px; top: -5px; width: 5px; height: 11px; background: #777; }
  .zp { margin-left: 4px; }
  .zoom { margin-left: 14px; font-size: 13.5px; color: #555; font-feature-settings: normal; }

  /* menu */
  .menu {
    position: absolute; left: 200px; top: 131px; width: 196px; height: 597px; box-sizing: border-box; z-index: 5;
    background: #fff; border: 1px solid #c6c6c6; box-shadow: 1px 2px 4px rgba(0,0,0,.2); padding-top: 1px; color: #3b3a39; word-spacing: 2.5px;
  }
  .mscroll { margin: 0 1px 4px 0; border: 1px solid #9a9a9a; display: flex; align-items: center; justify-content: center; height: 10px; }
  .mitem { height: 28px; display: flex; align-items: center; position: relative; white-space: nowrap; }
  .mitem.x { height: 28.4px; }
  .mitem u { margin: 0 1px; }
  .mi { margin-left: 12px; width: 17px; flex: none; display: block; }
  .mitem .mi + span { margin-left: 8px; }
  .mitem .k { letter-spacing: -.9px; }
  .arr { position: absolute; right: 8px; top: 9px; }
  .msep { height: 2px; background: #e1e1e1; margin: .75px 1px .75px 13px; }
  .mhead { height: 26px; line-height: 26px; padding-left: 13px; font-weight: 700; font-size: 12px; color: #444; }
  .mitem.more { background: #c8c6c4; margin-top: 2px; }

  /* annotations */
  .frame { position: absolute; box-sizing: border-box; border: 7px solid #ff0000; border-radius: 6px; z-index: 7; }
  .f1 { left: 21px; top: 262px; width: 125px; height: 80px; }
  .f2 { left: 213px; top: 103px; width: 29px; height: 36px; }
  .f3 { left: 195px; top: 689px; width: 203px; height: 38px; }
  .badge {
    position: absolute; width: 35px; height: 35px; box-sizing: border-box; z-index: 8; border-radius: 50%;
    border: 1.5px solid #f00; display: flex; align-items: center; justify-content: center;
    background: radial-gradient(circle, #e6e6e6 0, #fff 75%);
    box-shadow: 0 0 0 3px #fff, 0 1px 5px 3px rgba(0,0,0,.12);
    font: 700 28px/1 "Liberation Sans", sans-serif; color: #f00;
  }
  .b1 { left: 61px; top: 284px; }
  .b2 { left: 249px; top: 102px; }
  .b3 { left: 325px; top: 648px; }
</style>
